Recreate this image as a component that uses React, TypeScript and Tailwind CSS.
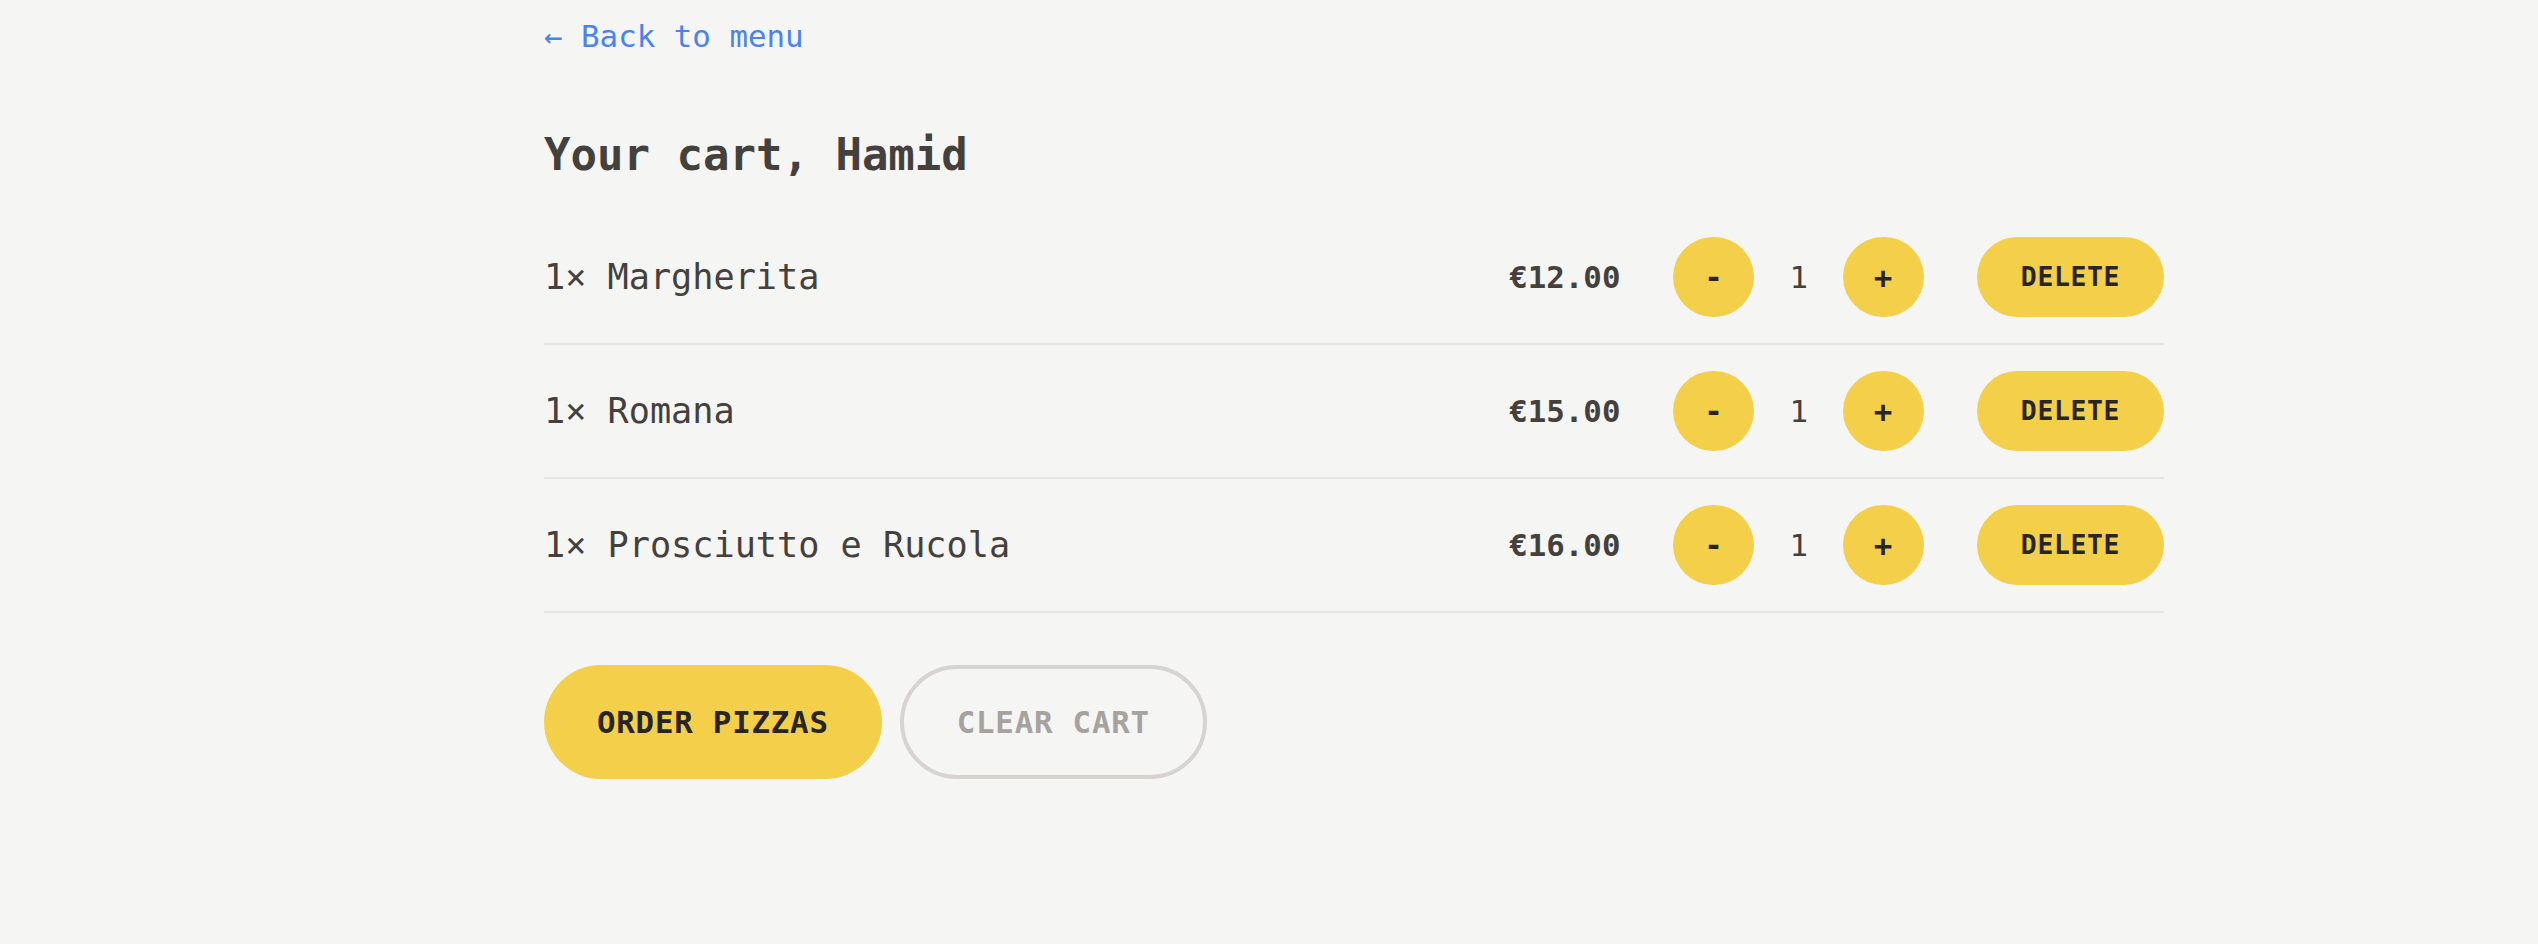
const cart = [
  { id: 1, name: "Margherita", quantity: 1, totalPrice: 12 },
  { id: 2, name: "Romana", quantity: 1, totalPrice: 15 },
  { id: 3, name: "Prosciutto e Rucola", quantity: 1, totalPrice: 16 },
];

function formatCurrency(value: number) {
  return "€" + value.toFixed(2);
}

function RoundButton({ children }: { children: React.ReactNode }) {
  return (
    <button className="flex h-[80px] w-[81px] items-center justify-center rounded-full bg-[#f3cf4a] text-[30.8px] leading-[44px] font-semibold tracking-[0.025em] text-[#292524]">
      {children}
    </button>
  );
}

function CartItem({ item }: { item: (typeof cart)[number] }) {
  return (
    <li className="flex items-center justify-between py-[26px]">
      <p className="text-[35.2px] leading-[52px] text-[#44403c]">
        {item.quantity}&times; {item.name}
      </p>
      <div className="flex items-center gap-[53px]">
        <p className="text-[30.8px] leading-[44px] font-bold text-[#44403c]">
          {formatCurrency(item.totalPrice)}
        </p>
        {/* Update quantity */}
        <div className="flex items-center gap-[35px]">
          <RoundButton>-</RoundButton>
          <span className="text-[30.8px] leading-[44px] font-medium text-[#44403c]">
            {item.quantity}
          </span>
          <RoundButton>+</RoundButton>
        </div>
        <button className="h-[80px] w-[187px] rounded-full bg-[#f3cf4a] text-[26.4px] leading-[35px] font-semibold uppercase tracking-[0.025em] text-[#292524]">
          Delete
        </button>
      </div>
    </li>
  );
}

export default function App() {
  return (
    <div className="min-h-screen bg-[#f5f5f4] font-['DejaVu_Sans_Mono',monospace] text-[#44403c]">
      <div className="ml-[544px] w-[1620px] pt-[14px]">
        <a
          href="#"
          className="block text-[30.8px] leading-[44px] text-[#4a83ee] hover:text-blue-600"
        >
          &larr; Back to menu
        </a>

        <h2 className="mt-[66px] text-[44px] leading-[61.6px] font-semibold text-[#44403c]">
          Your cart, Hamid
        </h2>

        <ul className="mt-[25px] divide-y-2 divide-[#e7e5e4] border-b-2 border-[#e7e5e4]">
          {cart.map((item) => (
            <CartItem key={item.id} item={item} />
          ))}
        </ul>

        <div className="mt-[52px] flex gap-[18px]">
          <button className="h-[114px] rounded-full bg-[#f3cf4a] px-[53px] text-[30.8px] leading-[44px] font-semibold uppercase tracking-[0.025em] text-[#292524]">
            Order pizzas
          </button>
          <button className="h-[114px] rounded-full border-[4px] border-[#d6d3d1] px-[53px] text-[30.8px] leading-[44px] font-semibold uppercase tracking-[0.025em] text-[#a8a29e]">
            Clear cart
          </button>
        </div>
      </div>
    </div>
  );
}
